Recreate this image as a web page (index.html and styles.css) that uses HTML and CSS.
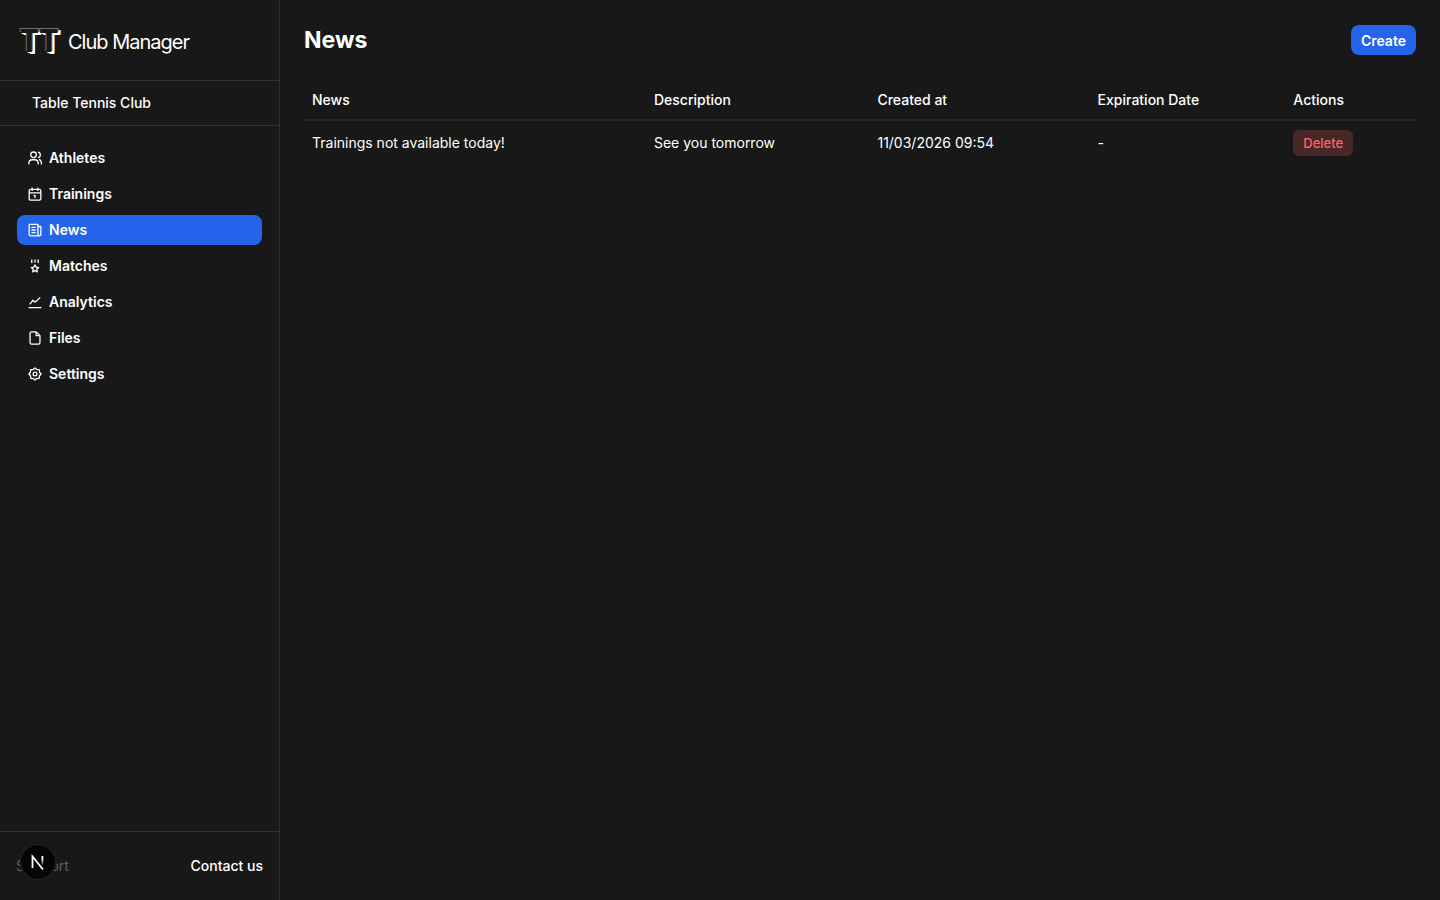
FILE: index.html
```html
<!DOCTYPE html>
<html lang="en">
<head>
    <meta charset="UTF-8">
    <meta name="viewport" content="width=device-width, initial-scale=1.0">
    <title>Club Manager</title>
    <link rel="stylesheet" href="styles.css">
</head>
<body>

<aside class="sidebar">
    <div class="brand">
        <span class="brand-mark"><span>T</span><span>T</span></span>
        <span class="brand-name">Club Manager</span>
    </div>

    <div class="club-name">Table Tennis Club</div>

    <nav class="menu">
        <a href="#">
            <svg viewBox="0 0 24 24"><circle cx="9.500" cy="6.500" r="4.800"/><path d="M1.500 23v-1.500c0-4 2.500-6.500 6-6.500h4c3.500 0 6 2.500 6 6.500V23M17 2a4.800 4.800 0 0 1 0 9.500M19 14.500c2.500 1 4 3.500 4 6.500v2"/></svg>
            Athletes
        </a>
        <a href="#">
            <svg viewBox="0 0 24 24"><rect x="2" y="4" width="20" height="18.500" rx="2.500"/><path d="M7 1v6M17 1v6M2 10h20M9.500 14.500H12V19"/></svg>
            Trainings
        </a>
        <a href="#" class="active">
            <svg viewBox="0 0 24 24"><path d="M19.500 22H4.500A2.500 2.500 0 0 1 2 19.500V2.500h15v17a2.500 2.500 0 0 0 5 0V6h-5M6 7.500h7M6 12h7M6 16.500h7"/></svg>
            News
        </a>
        <a href="#">
            <svg viewBox="0 0 24 24"><path d="M6.500 1v6M12 1v5M17.500 1v6M12 10l1.900 4 4.400.600-3.200 3.100.800 4.400-3.900-2.100-3.900 2.100.800-4.400-3.200-3.100 4.400-.600z"/></svg>
            Matches
        </a>
        <a href="#">
            <svg viewBox="0 0 24 24"><path d="M1 21.500h22M3 16l5.500-7 3.500 3 2.500-1.500L21 4"/></svg>
            Analytics
        </a>
        <a href="#">
            <svg viewBox="0 0 24 24"><path d="M14 1.500H6A2.500 2.500 0 0 0 3.500 4v16A2.500 2.500 0 0 0 6 22.500h12a2.500 2.500 0 0 0 2.500-2.500V8zM14 1.500V8h6.500"/></svg>
            Files
        </a>
        <a href="#">
            <svg viewBox="0 0 24 24"><path d="M12 1.500L15 4.300 19.400 4.600 19.700 9 22.500 12 19.700 15 19.400 19.400 15 19.700 12 22.500 9 19.700 4.600 19.400 4.300 15 1.500 12 4.300 9 4.600 4.600 9 4.300z"/><circle cx="12" cy="12" r="3.200"/></svg>
            Settings
        </a>
    </nav>

    <footer class="sidebar-footer">
        <span class="support">Support</span>
        <a href="#">Contact us</a>
    </footer>
</aside>

<main class="content">
    <header class="page-header">
        <h1>News</h1>
        <button class="create-btn">Create</button>
    </header>

    <table class="news-table">
        <colgroup>
            <col class="col-news">
            <col class="col-description">
            <col class="col-created">
            <col class="col-expiration">
            <col>
        </colgroup>
        <thead>
            <tr>
                <th>News</th>
                <th>Description</th>
                <th>Created at</th>
                <th>Expiration Date</th>
                <th>Actions</th>
            </tr>
        </thead>
        <tbody>
            <tr>
                <td>Trainings not available today!</td>
                <td>See you tomorrow</td>
                <td>11/03/2026 09:54</td>
                <td>-</td>
                <td><button class="delete-btn">Delete</button></td>
            </tr>
        </tbody>
    </table>
</main>

<button class="dev-badge" aria-label="Open dev tools">
    <svg viewBox="0 0 36 36">
        <defs>
            <linearGradient id="fade" x1="0" y1="0" x2="0" y2="1">
                <stop offset="0.3" stop-color="#fff"/>
                <stop offset="1" stop-color="#fff" stop-opacity="0.1"/>
            </linearGradient>
        </defs>
        <path d="M12.500 24V12.500L23 25.500" fill="none" stroke="#fff" stroke-width="1.800"/>
        <rect x="21.500" y="12" width="1.800" height="9" fill="url(#fade)"/>
    </svg>
</button>

</body>
</html>
```

FILE: styles.css
```css
* {
    margin: 0;
    padding: 0;
    box-sizing: border-box;
}

body {
    display: flex;
    min-height: 100vh;
    font-family: Inter, 'Liberation Sans', sans-serif;
    font-size: 14px;
    line-height: 20px;
    background-color: #181818;
    color: #fff;
}

a {
    color: inherit;
    text-decoration: none;
}

button {
    border: none;
    font-family: inherit;
    cursor: pointer;
}

.sidebar {
    display: flex;
    flex-direction: column;
    width: 280px;
    flex-shrink: 0;
    border-right: 1px solid #303030;
}

.brand {
    display: flex;
    align-items: center;
    gap: 8px;
    height: 80px;
    padding: 0 20px;
}

.brand-mark {
    display: flex;
    gap: 1px;
    width: 40px;
    font-family: 'Open Sans', sans-serif;
    font-size: 32px;
    font-weight: 700;
    line-height: 32px;
    color: #181818;
    text-shadow: -1px -1px #707070, 1px -1px #707070, 1px 1px #fff, 2px 1px #fff, 3px 1px #fff, 3px 2px #fff;
}

.brand-name {
    padding-top: 4px;
    font-size: 20px;
    line-height: 24px;
    letter-spacing: -1px;
}

.club-name {
    padding: 12px 32px;
    border-top: 1px solid #303030;
    border-bottom: 1px solid #303030;
    font-weight: 500;
}

.menu {
    display: flex;
    flex-direction: column;
    gap: 6px;
    padding: 17px;
}

.menu a {
    display: flex;
    align-items: center;
    gap: 7px;
    height: 30px;
    padding: 0 11px;
    border-radius: 8px;
    font-weight: 600;
}

.menu a.active {
    background-color: #2563eb;
}

.menu svg {
    width: 14px;
    height: 14px;
    fill: none;
    stroke: currentColor;
    stroke-width: 2.2;
    stroke-linejoin: round;
}

.sidebar-footer {
    display: flex;
    justify-content: space-between;
    margin-top: auto;
    padding: 24px 16px;
    border-top: 1px solid #303030;
}

.sidebar-footer a {
    font-weight: 500;
}

.support {
    color: #5d5d5d;
}

.content {
    flex: 1;
    padding: 24px;
}

.page-header {
    display: flex;
    align-items: center;
    justify-content: space-between;
    height: 32px;
    margin-bottom: 24px;
}

.page-header h1 {
    font-size: 23px;
    line-height: 32px;
    font-weight: 700;
}

.create-btn {
    height: 30px;
    padding: 0 10px;
    border-radius: 8px;
    font-size: 14px;
    font-weight: 600;
    color: #fff;
    background-color: #2563eb;
}

.news-table {
    width: 100%;
    table-layout: fixed;
    border-collapse: collapse;
    text-align: left;
}

.col-news {
    width: 30.75%;
}

.col-description {
    width: 20.1%;
}

.col-created {
    width: 19.8%;
}

.col-expiration {
    width: 17.6%;
}

.news-table th {
    height: 40px;
    padding: 0 8px;
    border-bottom: 2px solid #262626;
    font-weight: 500;
}

.news-table td {
    height: 44px;
    padding: 0 8px;
}

.delete-btn {
    height: 26px;
    padding: 0 10px;
    border-radius: 6px;
    font-size: 13px;
    font-weight: 500;
    color: #ff6467;
    background-color: #482729;
}

.dev-badge {
    position: fixed;
    left: 20px;
    bottom: 20px;
    width: 36px;
    height: 36px;
    border-radius: 50%;
    background-color: #050505;
    box-shadow: inset 0 0 0 1px #272727;
}
```
